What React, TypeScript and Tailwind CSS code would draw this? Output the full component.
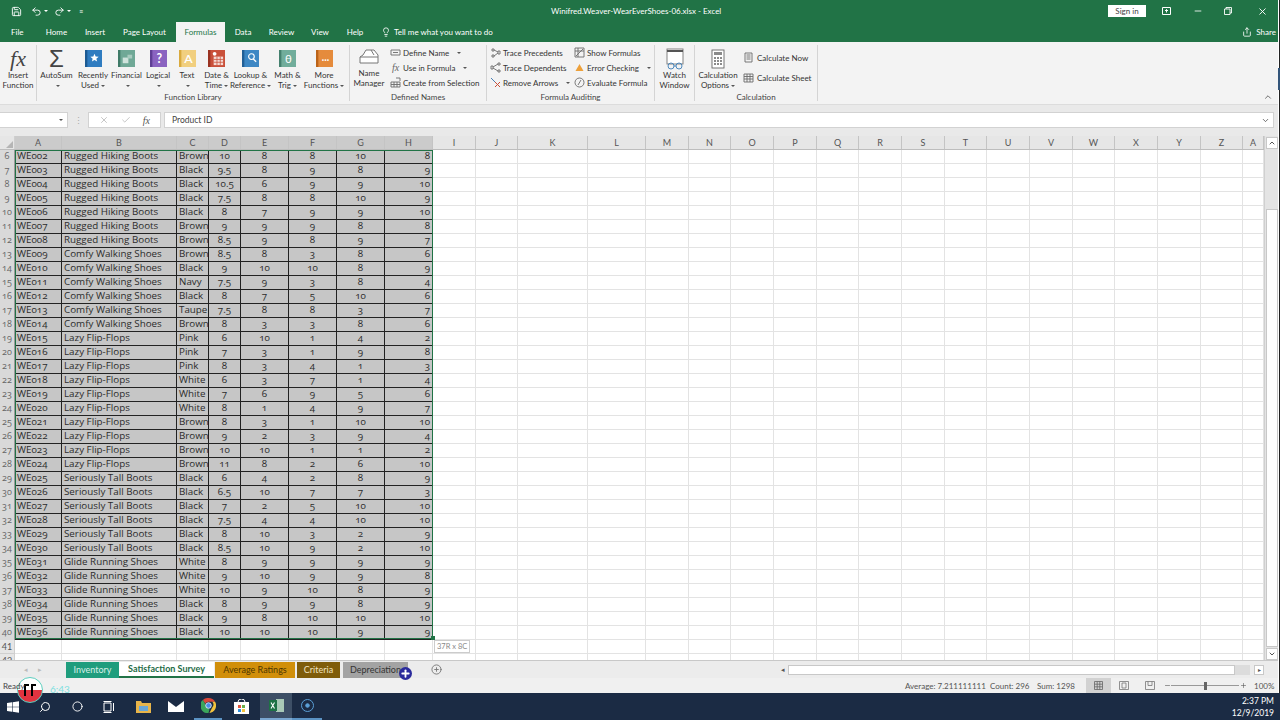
import React from 'react';
import { Save, Undo2, Redo2, Lightbulb, Share, X, Check, ChevronUp, ChevronDown, Minus, Plus, Search, Circle, PlusCircle } from 'lucide-react';

// Shared column track list: row header, A..Z, AA
const sheetCols =
  'grid grid-cols-[15px_47px_115px_32px_32px_48px_48px_48px_48px_43px_42px_70px_58px_43px_42px_43px_43px_42px_43px_43px_42px_43px_43px_42px_43px_43px_42px_21px]';

const headers = ['A', 'B', 'C', 'D', 'E', 'F', 'G', 'H', 'I', 'J', 'K', 'L', 'M', 'N', 'O', 'P', 'Q', 'R', 'S', 'T', 'U', 'V', 'W', 'X', 'Y', 'Z', 'A'];

const colours = 'Brown Black Black Black Black Brown Brown Brown Black Navy Black Taupe Brown Pink Pink Pink White White White Brown Brown Brown Brown Black Black Black Black Black Black White White White Black Black Black'.split(' ');

const ratings = [
  [10, 8, 8, 10, 8], [9.5, 8, 9, 8, 9], [10.5, 6, 9, 9, 10], [7.5, 8, 8, 10, 9], [8, 7, 9, 9, 10],
  [9, 9, 9, 8, 8], [8.5, 9, 8, 9, 7], [8.5, 8, 3, 8, 6], [9, 10, 10, 8, 9], [7.5, 9, 3, 8, 4],
  [8, 7, 5, 10, 6], [7.5, 8, 8, 3, 7], [8, 3, 3, 8, 6], [6, 10, 1, 4, 2], [7, 3, 1, 9, 8],
  [8, 3, 4, 1, 3], [6, 3, 7, 1, 4], [7, 6, 9, 5, 6], [8, 1, 4, 9, 7], [8, 3, 1, 10, 10],
  [9, 2, 3, 9, 4], [10, 10, 1, 1, 2], [11, 8, 2, 6, 10], [6, 4, 2, 8, 9], [6.5, 10, 7, 7, 3],
  [7, 2, 5, 10, 10], [7.5, 4, 4, 10, 10], [8, 10, 3, 2, 9], [8.5, 10, 9, 2, 10], [8, 9, 9, 9, 9],
  [9, 10, 9, 9, 8], [10, 9, 10, 8, 9], [8, 9, 9, 8, 9], [9, 8, 10, 10, 10], [10, 10, 10, 9, 9],
];

const productName = (i: number) => {
  if (i < 7) return 'Rugged Hiking Boots';
  if (i < 13) return 'Comfy Walking Shoes';
  if (i < 23) return 'Lazy Flip-Flops';
  if (i < 29) return 'Seriously Tall Boots';
  return 'Glide Running Shoes';
};

// Coloured "book" icon used by the function library buttons
const Book = ({ bg, spine, children }: { bg: string; spine: string; children?: React.ReactNode }) => (
  <svg width="17" height="19" viewBox="0 0 18 20">
    <rect x="0" y="1" width="18" height="18" fill={bg} />
    <rect x="0" y="1" width="2.5" height="18" fill={spine} />
    {children}
  </svg>
);

const Caret = ({ colour = 'border-t-[#555]' }: { colour?: string }) => (
  <span className={`inline-block ml-[2px] align-middle border-x-[2px] border-t-[2px] border-x-transparent ${colour}`} />
);

const LargeButton = ({ width, icon, lines, caret }: { width: string; icon: React.ReactNode; lines: string[]; caret?: boolean }) => (
  <div className={`${width} flex flex-col items-center shrink-0`}>
    <div className="h-[23px] flex items-center justify-center">{icon}</div>
    <div className="text-center leading-[10px] whitespace-nowrap">{lines[0]}</div>
    <div className="text-center leading-[10px] whitespace-nowrap h-[10px]">
      {lines[1]}
      {caret && <Caret />}
    </div>
  </div>
);

const SmallButton = ({ icon, label, caret, className }: { icon: React.ReactNode; label: string; caret?: boolean; className?: string }) => (
  <div className={`h-[15px] flex items-center gap-[2px] whitespace-nowrap ${className ?? ''}`}>
    <span className="w-[11px] h-[11px] flex items-center justify-center shrink-0">{icon}</span>
    <span>{label}</span>
    {caret && <span className="ml-[4px]"><Caret /></span>}
  </div>
);

const Glyph = ({ d }: { d: string }) => (
  <svg width="11" height="11" viewBox="0 0 11 11" fill="none" stroke="#6b6b6b" strokeWidth="0.9">
    <path d={d} />
  </svg>
);

const GroupLabel = ({ label }: { label: string }) => (
  <div className="h-[13px] text-center leading-[13px] text-[#444]">{label}</div>
);

const Sep = () => <div className="w-px self-stretch my-[3px] bg-[#d4d4d4] shrink-0" />;

const Ribbon = () => (
  <div className="h-[63px] bg-[#f3f3f3] border-b border-[#dcdcdc] flex text-[8px] text-[#333] relative">
    <div className="w-[36px] shrink-0 flex flex-col pt-[5px]">
      <LargeButton
        width="w-[36px]"
        icon={<span className="font-['Liberation_Serif',serif] italic text-[22px] leading-none text-[#444]">fx</span>}
        lines={['Insert', 'Function']}
      />
    </div>
    <Sep />
    <div className="w-[312px] shrink-0 flex flex-col justify-between pt-[5px]">
      <div className="flex">
        <LargeButton width="w-[39px]" caret icon={<span className="font-['Liberation_Sans',sans-serif] text-[24px] leading-none text-[#444]">Σ</span>} lines={['AutoSum', '']} />
        <LargeButton width="w-[34px]" lines={['Recently', 'Used']} caret icon={
          <Book bg="#2f7cc0" spine="#1c5a92"><path d="M10 5l1.3 3 3.2.2-2.5 2 .9 3.1-2.9-1.7-2.7 1.7.8-3.1-2.4-2 3.1-.2z" fill="#fff" /></Book>} />
        <LargeButton width="w-[33px]" caret lines={['Financial', '']} icon={
          <Book bg="#6fa896" spine="#3f7a67"><rect x="5" y="9" width="6" height="6" fill="#cfe3dc" /><rect x="10" y="6" width="5" height="4" fill="#a8cbbf" /></Book>} />
        <LargeButton width="w-[30px]" caret lines={['Logical', '']} icon={
          <Book bg="#8a63c0" spine="#5f3f94"><text x="10" y="15" fontSize="13" fontWeight="700" textAnchor="middle" fill="#fff">?</text></Book>} />
        <LargeButton width="w-[28px]" caret lines={['Text', '']} icon={
          <Book bg="#f1cf7f" spine="#d9aa3e"><text x="10" y="15" fontSize="13" fontWeight="600" textAnchor="middle" fill="#fff">A</text></Book>} />
        <LargeButton width="w-[31px]" lines={['Date &', 'Time']} caret icon={
          <Book bg="#c9503a" spine="#9a3322"><rect x="6" y="8" width="10" height="9" fill="#f4d9d3" /><path d="M6 11h10M6 14h10M9.5 8v9M13 8v9" stroke="#c9503a" strokeWidth="0.8" /><circle cx="7" cy="5" r="2" fill="#fff" /></Book>} />
        <LargeButton width="w-[37px]" lines={['Lookup &', 'Reference']} caret icon={
          <Book bg="#3d87c4" spine="#215f96"><circle cx="10" cy="8" r="3" fill="none" stroke="#fff" strokeWidth="1.2" /><path d="M12 10.5l3 3" stroke="#fff" strokeWidth="1.4" /></Book>} />
        <LargeButton width="w-[37px]" lines={['Math &', 'Trig']} caret icon={
          <Book bg="#71ad9b" spine="#44806e"><text x="10" y="15" fontSize="12" textAnchor="middle" fill="#fff">θ</text></Book>} />
        <LargeButton width="w-[36px]" lines={['More', 'Functions']} caret icon={
          <Book bg="#e58b3c" spine="#bb6318"><text x="10" y="13" fontSize="11" fontWeight="700" textAnchor="middle" fill="#fff">...</text></Book>} />
      </div>
      <GroupLabel label="Function Library" />
    </div>
    <Sep />
    <div className="w-[136px] shrink-0 flex flex-col justify-between pt-[3px]">
      <div className="flex">
        <LargeButton width="w-[38px]" lines={['Name', 'Manager']} icon={
          <svg width="20" height="18" viewBox="0 0 20 18" fill="none" stroke="#777" strokeWidth="1">
            <path d="M4 7l3-5h8l4 5v8H1V9z" fill="#fff" /><path d="M1 9h18" /><path d="M12 2l3 5" />
          </svg>} />
        <div className="flex flex-col pl-[2px]">
          <SmallButton icon={<Glyph d="M1 3h9v5H1zM3 5.5h5" />} label="Define Name" caret />
          <SmallButton icon={<span className="font-['Liberation_Serif',serif] italic text-[10px] text-[#666]">fx</span>} label="Use in Formula" caret />
          <SmallButton icon={<Glyph d="M1 5h9v5H1zM1 7.5h9M4 5v5M7 5v5M6 1h4v3" />} label="Create from Selection" />
        </div>
      </div>
      <GroupLabel label="Defined Names" />
    </div>
    <Sep />
    <div className="w-[167px] shrink-0 flex flex-col justify-between pt-[3px]">
      <div className="flex pl-[3px]">
        <div className="flex flex-col w-[84px]">
          <SmallButton icon={<Glyph d="M2 2h2v2H2zM2 8h2v2H2zM8 4h2v3H8zM4 3l4 2M4 9l4-3" />} label="Trace Precedents" />
          <SmallButton icon={<Glyph d="M1 4h2v3H1zM8 1h2v2H8zM8 8h2v2H8zM3 5l5-3M3 6l5 3" />} label="Trace Dependents" />
          <SmallButton icon={<svg width="11" height="11" viewBox="0 0 11 11" fill="none" strokeWidth="1"><path d="M1 1l4 4" stroke="#4a7fb5" /><path d="M5 5l5 5M10 5l-5 5" stroke="#c9503a" /></svg>} label="Remove Arrows" caret />
        </div>
        <div className="flex flex-col">
          <SmallButton icon={<Glyph d="M1 1h9v9H1zM1 4h9M4 1v9M2 9l7-7" />} label="Show Formulas" />
          <SmallButton icon={<svg width="11" height="11" viewBox="0 0 11 11"><path d="M5.5 2l4 7h-8z" fill="#eda03a" /></svg>} label="Error Checking" caret />
          <SmallButton icon={<svg width="11" height="11" viewBox="0 0 11 11" fill="none" stroke="#6b6b6b" strokeWidth="0.9"><circle cx="5.5" cy="5.5" r="4.5" /><path d="M4 8l3-5" /></svg>} label="Evaluate Formula" />
        </div>
      </div>
      <GroupLabel label="Formula Auditing" />
    </div>
    <Sep />
    <div className="w-[39px] shrink-0 flex flex-col pt-[5px]">
      <LargeButton width="w-[39px]" lines={['Watch', 'Window']} icon={
        <svg width="18" height="22" viewBox="0 0 18 22" fill="none" stroke="#777" strokeWidth="0.9">
          <rect x="1" y="1" width="16" height="15" fill="#fff" /><path d="M1 3h16" stroke="#555" strokeWidth="2" />
          <circle cx="5" cy="18" r="3" stroke="#3d7fb8" /><circle cx="13" cy="18" r="3" stroke="#3d7fb8" /><path d="M8 18h2" stroke="#3d7fb8" />
        </svg>} />
    </div>
    <Sep />
    <div className="w-[122px] shrink-0 flex flex-col justify-between pt-[5px]">
      <div className="flex">
        <LargeButton width="w-[46px]" lines={['Calculation', 'Options']} caret icon={
          <svg width="14" height="20" viewBox="0 0 14 20" fill="none" stroke="#666" strokeWidth="0.9">
            <rect x="1" y="1" width="12" height="18" fill="#fff" /><rect x="3" y="3" width="8" height="3" fill="#8a8a8a" stroke="none" />
            <path d="M3 9h8M3 12h8M3 15h8" strokeWidth="1.6" strokeDasharray="2 1" />
          </svg>} />
        <div className="flex flex-col gap-[5px] pt-[3px] pl-[2px]">
          <SmallButton icon={<Glyph d="M2 1h7v9H2zM3.5 3h4M3.5 5h4M3.5 7h4" />} label="Calculate Now" className="gap-[3px]" />
          <SmallButton icon={<Glyph d="M1 2h9v8H1zM1 4.5h9M1 7h9M4 2v8M7 2v8" />} label="Calculate Sheet" className="gap-[3px]" />
        </div>
      </div>
      <GroupLabel label="Calculation" />
    </div>
    <Sep />
    <ChevronUp size={10} className="absolute right-[7px] bottom-[2px] text-[#555]" />
  </div>
);

const FormulaBar = () => (
  <div className="h-[31px] bg-[#e9e9e9] flex items-center text-[#444] pb-px">
    <div className="w-[68px] h-[16px] bg-white border-y border-r border-[#d2d2d2] flex items-center justify-end pr-[4px]"><Caret /></div>
    <span className="w-[20px] text-center text-[#aaa] text-[9px] leading-none">⋮</span>
    <div className="w-[73px] h-[16px] bg-white border border-[#d2d2d2] flex items-center justify-around px-[4px]">
      <X size={10} className="text-[#bbb]" />
      <Check size={10} className="text-[#bbb]" />
      <span className="font-['Liberation_Serif',serif] italic text-[10px] text-[#555]">fx</span>
    </div>
    <div className="ml-[3px] flex-1 mr-[6px] h-[16px] bg-white border border-[#d2d2d2] flex items-center justify-between pl-[7px] pr-[3px] text-[8.5px]">
      <span>Product ID</span>
      <ChevronDown size={9} />
    </div>
  </div>
);

const Sheet = () => (
  <div className="h-[524px] bg-white flex overflow-hidden relative text-[9px]">
    <div className="w-[1264px] shrink-0">
      <div className={`${sheetCols} h-[14px] bg-[#e6e6e6] text-[#555] text-center leading-[13px] border-b border-[#bdbdbd]`}>
        <div className="border-r border-[#cfcfcf] flex items-end justify-end pr-[1px] pb-[1px]">
          <svg width="7" height="7" viewBox="0 0 7 7"><path d="M7 0v7H0z" fill="#b5b5b5" /></svg>
        </div>
        {headers.map((h, i) => (
          <div key={i} className={`border-r border-[#c4c4c4] ${i < 8 ? 'bg-[#cbcbcb]' : ''}`}>{h}</div>
        ))}
      </div>
      {ratings.map((r, i) => (
        <div key={i} className={`${sheetCols} h-[14px] text-[9.8px] leading-[11px] text-[#2b2b2b] oldstyle-nums font-['Open_Sans',sans-serif]`}>
          <div className="bg-[#d9d9d9] text-[#666] text-[9px] text-center border-r border-[#999]">{i + 6}</div>
          <div className="bg-[#c6c6c6] border-r border-b border-[#222] pl-[2px]">WE{String(i + 2).padStart(3, '0')}</div>
          <div className="bg-[#c6c6c6] border-r border-b border-[#222] pl-[2px] whitespace-nowrap">{productName(i)}</div>
          <div className="bg-[#c6c6c6] border-r border-b border-[#222] pl-[2px]">{colours[i]}</div>
          {r.slice(0, 4).map((v, j) => (
            <div key={j} className="bg-[#c6c6c6] border-r border-b border-[#222] text-center">{v}</div>
          ))}
          <div className="bg-[#c6c6c6] border-b border-[#222] text-right pr-[3px]">{r[4]}</div>
          {headers.slice(8).map((_, j) => (
            <div key={j} className="border-r border-b border-[#e3e3e3]" />
          ))}
        </div>
      ))}
      {[41, 42].map((n) => (
        <div key={n} className={`${sheetCols} h-[14px]`}>
          <div className="bg-[#e6e6e6] text-[#555] text-center leading-[13px] border-r border-b border-[#cfcfcf]">{n}</div>
          {headers.map((_, j) => (
            <div key={j} className="border-r border-b border-[#e3e3e3]" />
          ))}
        </div>
      ))}
    </div>
    <div className="w-[14px] bg-[#e4e4e4] border-l border-[#d0d0d0] flex flex-col items-center pt-[1px]">
      <div className="w-[12px] h-[12px] bg-white border border-[#c8c8c8] flex items-center justify-center"><ChevronUp size={8} /></div>
      <div className="h-[60px] shrink-0" />
      <div className="w-[12px] flex-1 bg-white border border-[#c8c8c8]" />
      <div className="w-[12px] h-[12px] mt-[1px] bg-white border border-[#c8c8c8] flex items-center justify-center"><ChevronDown size={8} /></div>
    </div>
  </div>
);

const SheetTab = ({ label, className }: { label: string; className: string }) => (
  <div className={`h-[16px] flex items-center justify-center text-[9px] ${className}`}>{label}</div>
);

const TabBar = () => (
  <div className="h-[18px] bg-[#ececec] flex items-center border-t border-[#c8c8c8] relative">
    <div className="w-[66px] flex items-center justify-center gap-[10px] text-[#bbb] text-[7px]">
      <span>◂</span>
      <span>▸</span>
    </div>
    <SheetTab label="Inventory" className="w-[53px] bg-[#1f9d7d] text-[#d9f0e8]" />
    <SheetTab label="Satisfaction Survey" className="w-[95px] bg-white text-[#1e6b45] font-bold border-b-2 border-[#217346]" />
    <SheetTab label="Average Ratings" className="ml-[1px] w-[80px] bg-[#d18f0a] text-[#4d3600]" />
    <SheetTab label="Criteria" className="ml-[2px] w-[43px] bg-[#7f5c0a] text-[#f0e2c0]" />
    <SheetTab label="Depreciation" className="ml-[3px] w-[65px] bg-[#a3a3a3] text-[#333]" />
    <PlusCircle size={11} className="ml-[23px] text-[#777]" />
    <div className="ml-[339px] w-[483px] h-[11px] flex items-center">
      <span className="w-[7px] text-[7px] text-[#555] leading-none">◂</span>
      <div className="w-[447px] h-[10px] bg-white border border-[#c8c8c8]" />
      <div className="w-[15px] h-[10px] bg-[#dcdcdc]" />
      <div className="ml-[4px] w-[10px] h-[10px] bg-white border border-[#c8c8c8] text-[6px] leading-[8px] text-center text-[#555]">▸</div>
    </div>
  </div>
);

const StatusBar = () => (
  <div className="h-[15px] bg-[#f0f0f0] flex items-center text-[8px] text-[#555] whitespace-nowrap">
    <span className="ml-[3px] relative z-10 text-[#444]">Ready</span>
    <div className="ml-auto flex items-center h-full">
      <span className="w-[85px]">Average: 7.211111111</span>
      <span className="w-[47px]">Count: 296</span>
      <span className="w-[49px]">Sum: 1298</span>
      <div className="w-[25px] h-full bg-[#d2d2d2] flex items-center justify-center">
        <svg width="9" height="9" viewBox="0 0 9 9" fill="none" stroke="#666" strokeWidth="0.8"><path d="M.5.5h8v8h-8zM.5 3.2h8M.5 5.8h8M3.2.5v8M5.8.5v8" /></svg>
      </div>
      <div className="w-[26px] flex justify-center">
        <svg width="10" height="9" viewBox="0 0 10 9" fill="none" stroke="#777" strokeWidth="0.8"><path d="M.5.5h9v8h-9zM3 2h4v5H3z" /></svg>
      </div>
      <div className="w-[26px] flex justify-center">
        <svg width="10" height="9" viewBox="0 0 10 9" fill="none" stroke="#777" strokeWidth="0.8"><path d="M.5.5h9v8h-9zM3 .5v4h4v-4" /></svg>
      </div>
      <Minus size={7} className="ml-[1px]" />
      <div className="w-[68px] h-px bg-[#999] flex items-center justify-center">
        <div className="w-[3px] h-[8px] bg-[#666]" />
      </div>
      <Plus size={7} className="ml-[1px]" />
      <span className="ml-[7px] mr-[8px] w-[18px]">100%</span>
    </div>
  </div>
);

const Taskbar = () => (
  <div className="h-[27px] bg-[#1b2b44] flex items-center text-white">
    <div className="w-[26px] flex justify-center">
      <svg width="12" height="12" viewBox="0 0 12 12" fill="#fff"><path d="M0 2l5-.7v4.4H0zM5.6 1.2L12 .2v5.5H5.6zM0 6.3h5v4.4L0 10zM5.6 6.3H12v5.5l-6.4-1z" /></svg>
    </div>
    <div className="w-[38px] flex justify-center"><Search size={12} className="-scale-x-100" /></div>
    <div className="w-[26px] flex justify-center"><Circle size={11} strokeWidth={2} /></div>
    <div className="w-[38px] flex justify-center">
      <svg width="12" height="12" viewBox="0 0 12 12" fill="none" stroke="#fff" strokeWidth="1"><path d="M1 2h7v8H1zM.5 .5h8M.5 11.5h8M10.5 2v8" /></svg>
    </div>
    <div className="w-[30px] flex justify-center">
      <svg width="15" height="13" viewBox="0 0 15 13"><path d="M0 1h5l1 2h9v10H0z" fill="#e8b54a" /><rect x="3" y="6" width="9" height="5" fill="#6aa6d6" /></svg>
    </div>
    <div className="w-[36px] flex justify-center">
      <svg width="16" height="11" viewBox="0 0 16 11"><rect width="16" height="11" fill="#fff" /><path d="M0 0l8 6 8-6" fill="#1b2b44" /></svg>
    </div>
    <div className="w-[28px] h-full flex items-center justify-center border-b-2 border-[#5b93c4]">
      <svg width="15" height="15" viewBox="0 0 16 16">
        <path d="M8 0a8 8 0 0 1 7 4H8a4 4 0 0 0-3.5 2L2 2a8 8 0 0 1 6-2z" fill="#d9473a" />
        <path d="M15 4a8 8 0 0 1-6 12l3-6a4 4 0 0 0 0-6z" fill="#f3c33d" />
        <path d="M2 2l4 7a4 4 0 0 0 3 3l-1 4A8 8 0 0 1 2 2z" fill="#3ba55c" />
        <circle cx="8" cy="8" r="3" fill="#4a8ee6" stroke="#fff" strokeWidth="0.8" />
      </svg>
    </div>
    <div className="w-[38px] flex justify-center">
      <svg width="15" height="15" viewBox="0 0 15 15">
        <rect y="3" width="15" height="12" fill="#fff" /><path d="M4 3a3.5 3 0 0 1 7 0" fill="none" stroke="#fff" />
        <rect x="4" y="6" width="3" height="3" fill="#e2553d" /><rect x="8" y="6" width="3" height="3" fill="#6ab04c" />
        <rect x="4" y="10" width="3" height="3" fill="#2f8fdc" /><rect x="8" y="10" width="3" height="3" fill="#f3c33d" />
      </svg>
    </div>
    <div className="w-[32px] h-full bg-[#3d4f66] flex items-center justify-center border-b-2 border-[#7aa7d0]">
      <svg width="15" height="13" viewBox="0 0 15 13">
        <rect x="7" y="0" width="8" height="13" fill="#a9c9b6" /><rect x="0" y="1" width="8" height="11" fill="#1e7145" />
        <path d="M2 3.5l3.5 6M5.5 3.5l-3.5 6" stroke="#fff" strokeWidth="1.1" />
      </svg>
    </div>
    <div className="w-[30px] h-full flex items-center justify-center border-b-2 border-[#5b93c4]">
      <svg width="13" height="13" viewBox="0 0 13 13" fill="none" stroke="#5b9fd6" strokeWidth="1"><circle cx="6.5" cy="6.5" r="6" /><circle cx="6.5" cy="6.5" r="1.8" fill="#5b9fd6" /></svg>
    </div>
    <div className="ml-auto mr-[6px] text-right text-[8.5px] leading-[12px]">
      <div>2:37 PM</div>
      <div>12/9/2019</div>
    </div>
  </div>
);

export default function App() {
  const tabs = ['Home', 'Insert', 'Page Layout', 'Formulas', 'Data', 'Review', 'View', 'Help'];
  const tabWidths = ['w-[41px]', 'w-[36px]', 'w-[63px]', 'w-[49px]', 'w-[36px]', 'w-[41px]', 'w-[36px]', 'w-[34px]'];

  return (
    <div className="relative w-[1280px] h-[720px] overflow-hidden font-['Lato',sans-serif]">
      {/* Title bar */}
      <div className="h-[22px] bg-[#217346] flex items-center text-white text-[8px] relative">
        <Save size={11} className="ml-[11px]" />
        <Undo2 size={11} className="ml-[9px]" />
        <Caret colour="border-t-white" />
        <Redo2 size={11} className="ml-[6px]" />
        <Caret colour="border-t-white" />
        <span className="ml-[8px] text-[7px]">≡</span>
        <span className="absolute left-[551px] top-[5px]">Winifred.Weaver-WearEverShoes-06.xlsx  -  Excel</span>
        <div className="ml-auto flex items-center">
          <div className="w-[38px] h-[12px] bg-white text-[#444] text-center leading-[12px]">Sign in</div>
          <svg width="9" height="8" viewBox="0 0 9 8" fill="none" stroke="#fff" className="ml-[16px]"><path d="M.5.5h8v7h-8zM4.5 5.5v-3M3 4l1.5-1.5L6 4" /></svg>
          <Minus size={10} className="ml-[22px]" />
          <svg width="8" height="8" viewBox="0 0 8 8" fill="none" stroke="#fff" strokeWidth="0.9" className="ml-[21px]"><path d="M.5 2h5.5v5.5H.5zM2 2V.5h5.5V6H6" /></svg>
          <X size={11} className="ml-[25px] mr-[12px]" />
        </div>
      </div>

      {/* Ribbon tabs */}
      <div className="h-[20px] bg-[#217346] flex items-center text-white text-[8px]">
        <div className="w-[36px] pl-[11px]">File</div>
        {tabs.map((t, i) => (
          <div
            key={t}
            className={`${tabWidths[i]} h-full flex items-center justify-center ${t === 'Formulas' ? 'bg-[#f3f3f3] text-[#217346]' : ''}`}
          >
            {t}
          </div>
        ))}
        <Lightbulb size={10} className="ml-[9px]" />
        <span className="ml-[3px]">Tell me what you want to do</span>
        <div className="ml-auto mr-[4px] flex items-center gap-[4px]">
          <Share size={10} />
          <span>Share</span>
        </div>
      </div>

      <Ribbon />
      <FormulaBar />
      <Sheet />
      <TabBar />
      <StatusBar />
      <Taskbar />

      {/* Window edge at the far right */}
      <div className="absolute right-0 top-0 w-[2px] h-[693px] bg-white border-r border-[#222]" />
      <div className="absolute right-0 top-[68px] w-[2px] h-[22px] bg-[#33557a]" />

      {/* Selection outline and its size tip */}
      <div className="absolute left-[15px] top-[150px] w-[418px] h-[489px] border border-[#217346] pointer-events-none" />
      <div className="absolute left-[431px] top-[636px] w-[4px] h-[4px] bg-[#217346]" />
      <div className="absolute left-[434px] top-[640px] h-[13px] px-[2px] bg-white border border-[#ccc] text-[7.5px] leading-[11px] text-[#888]">37R x 8C</div>

      {/* Screen recorder badge */}
      <div className="absolute left-[17px] top-[677px] w-[26px] h-[26px] rounded-full bg-linear-to-b from-white from-50% to-[#e0333f] to-50% border border-[#5fd0c0] flex items-center justify-center gap-[2px]">
        <span className="w-[5px] h-[12px] border-l-2 border-t-2 border-black" />
        <span className="w-[5px] h-[12px] border-l-2 border-t-2 border-black" />
      </div>
      <span className="absolute left-[50px] top-[682px] text-[10px] text-[#7fe0e0]">6:43</span>

      {/* Mouse cursor */}
      <div className="absolute left-[399px] top-[667px] w-[13px] h-[13px] rounded-full bg-[#2a2a9c] flex items-center justify-center">
        <Plus size={11} strokeWidth={4} className="text-white" />
      </div>
    </div>
  );
}
